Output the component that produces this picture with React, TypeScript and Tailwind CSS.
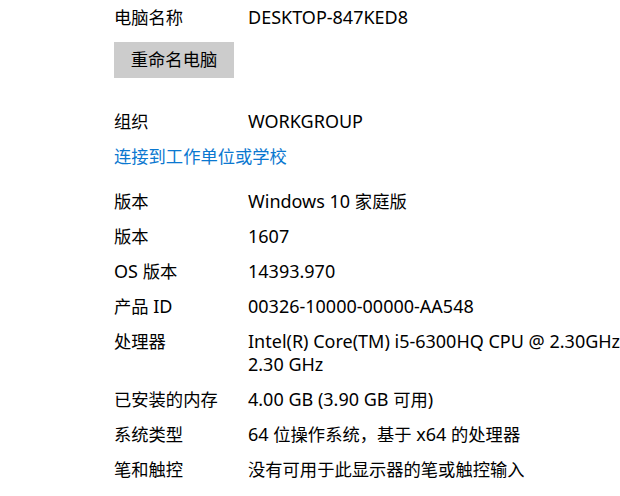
const rowsA = [
  { label: '版本', value: 'Windows 10 家庭版' },
  { label: '版本', value: '1607' },
  { label: 'OS 版本', value: '14393.970' },
  { label: '产品 ID', value: '00326-10000-00000-AA548' },
  { label: '处理器', value: 'Intel(R) Core(TM) i5-6300HQ CPU @ 2.30GHz 2.30 GHz' },
  { label: '已安装的内存', value: '4.00 GB (3.90 GB 可用)' },
  { label: '系统类型', value: '64 位操作系统，基于 x64 的处理器' },
  { label: '笔和触控', value: '没有可用于此显示器的笔或触控输入' },
];

// CJK runs are drawn a touch smaller than the Latin text, like the Windows UI font
function Mixed({ text }: { text: string }) {
  const parts = text.split(/([\u3000-\u9fff\uff00-\uffef]+)/);
  return (
    <>
      {parts.map((p, i) =>
        i % 2 === 1 ? (
          <span key={i} className="text-[17.3px]">
            {p}
          </span>
        ) : (
          p
        )
      )}
    </>
  );
}

function Row({ label, value }: { label: string; value: string }) {
  return (
    <div className="flex py-[6px] leading-[23px]">
      <div className="w-[134px] shrink-0">
        <Mixed text={label} />
      </div>
      <div className="w-[385px] shrink-0">
        <Mixed text={value} />
      </div>
    </div>
  );
}

export default function App() {
  return (
    <div
      className="w-[620px] h-[496px] overflow-hidden bg-white text-black text-[18px] pl-[114px]"
      style={{ fontFamily: '"Segoe UI", "Noto Sans", "Noto Sans CJK SC", sans-serif' }}
    >
      <Row label="电脑名称" value="DESKTOP-847KED8" />
      <button className="mt-[7px] w-[120px] h-[36px] bg-[#cccccc] text-black text-[17.3px]">
        重命名电脑
      </button>
      <div className="mt-[26px]">
        <Row label="组织" value="WORKGROUP" />
        <div className="py-[6px] leading-[23px] text-[17.3px] text-[#0b78d0]">连接到工作单位或学校</div>
      </div>
      <div className="mt-[10px]">
        {rowsA.map((r, i) => (
          <Row key={i} label={r.label} value={r.value} />
        ))}
      </div>
    </div>
  );
}
